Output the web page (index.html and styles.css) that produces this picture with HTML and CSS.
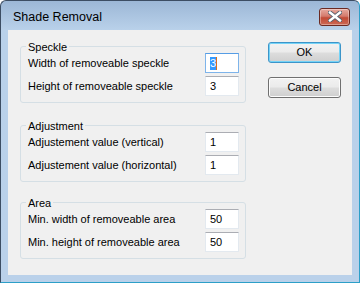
FILE: index.html
```html
<!DOCTYPE html>
<html lang="en">
<head>
    <meta charset="UTF-8">
    <title>Shade Removal</title>
    <link rel="stylesheet" href="styles.css">
</head>
<body>

    <div class="window">
        <div class="titlebar">
            <span class="title">Shade Removal</span>
            <div class="close-btn">
                <svg width="14" height="11" viewBox="0 0 14 11">
                    <path d="M2 1.5 L12 9.5 M12 1.5 L2 9.5" stroke="#55606d" stroke-width="4.2" stroke-linecap="square"/>
                    <path d="M2 1.5 L12 9.5 M12 1.5 L2 9.5" stroke="#ffffff" stroke-width="2.4" stroke-linecap="square"/>
                </svg>
            </div>
        </div>

        <div class="client">
            <div class="groups">
                <div class="group group-speckle">
                    <div class="group-title">Speckle</div>
                    <div class="row">
                        <span class="label">Width of removeable speckle</span>
                        <span class="field focused"><span class="sel">3</span><span class="caret"></span></span>
                    </div>
                    <div class="row">
                        <span class="label">Height of removeable speckle</span>
                        <span class="field">3</span>
                    </div>
                </div>

                <div class="group group-adjust">
                    <div class="group-title">Adjustment</div>
                    <div class="row">
                        <span class="label">Adjustement value (vertical)</span>
                        <span class="field">1</span>
                    </div>
                    <div class="row">
                        <span class="label">Adjustement value (horizontal)</span>
                        <span class="field">1</span>
                    </div>
                </div>

                <div class="group group-area">
                    <div class="group-title">Area</div>
                    <div class="row">
                        <span class="label">Min. width of removeable area</span>
                        <span class="field">50</span>
                    </div>
                    <div class="row">
                        <span class="label">Min. height of removeable area</span>
                        <span class="field">50</span>
                    </div>
                </div>
            </div>

            <div class="buttons">
                <div class="btn default">OK</div>
                <div class="btn">Cancel</div>
            </div>
        </div>
    </div>

</body>
</html>
```

FILE: styles.css
```css
/* Windows 7 basic style dialog */
body {
    margin: 0;
    background: #ffffff;
    font-family: "Liberation Sans", Arial, sans-serif;
}
.window {
    width: 360px;
    height: 283px;
    box-sizing: border-box;
    border: 1px solid #3c4d63;
    border-right-color: #2c9fc8;
    border-bottom-color: #2c9fc8;
    border-radius: 6px 6px 0 0;
    background: linear-gradient(#9cb7d6 0px, #b9d1ea 29px, #bad1ea 100%);
    display: flex;
    flex-direction: column;
}
.titlebar {
    height: 29px;
    flex: none;
    display: flex;
    align-items: center;
    justify-content: space-between;
    padding: 0 9px 0 12px;
}
.title {
    font-size: 12.5px;
    color: #000;
    padding-top: 2px;
}
.close-btn {
    width: 29px;
    height: 16px;
    border: 1px solid #6b2a22;
    border-radius: 3px;
    background: linear-gradient(#e6a99f 0%, #d47a6c 45%, #c24a36 55%, #cc6a55 100%);
    box-shadow: inset 0 0 0 1px rgba(255, 255, 255, 0.35);
    display: flex;
    align-items: center;
    justify-content: center;
    margin-top: 2px;
}
.client {
    flex: 1;
    margin: 0 7px 7px 7px;
    background: #f0f0f0;
    display: flex;
    align-items: flex-start;
    padding: 12px 0 0 12px;
    font-size: 11px;
    line-height: 13px;
    color: #000;
}
.groups {
    width: 226px;
    padding-top: 4px;
}
.group {
    box-sizing: border-box;
    border: 1px solid #d5dfe5;
    border-radius: 3px;
    padding: 0 6px 6px 7px;
}
.group-adjust {
    margin-top: 22px;
}
.group-area {
    margin-top: 20px;
}
.group-title {
    width: fit-content;
    margin: -6px 0 0 -2px;
    padding: 0 2px;
    height: 12px;
    line-height: 12px;
    background: #f0f0f0;
}
.row {
    display: flex;
    align-items: center;
    justify-content: space-between;
    height: 20px;
    margin-bottom: 3px;
}
.row:last-child {
    margin-bottom: 0;
}
.field {
    box-sizing: border-box;
    width: 34px;
    height: 20px;
    background: #fff;
    border: 1px solid #e3e9ef;
    border-top-color: #abadb3;
    padding: 0 0 0 4px;
    display: flex;
    align-items: center;
}
.field.focused {
    border-color: #7eb4ea;
    border-top-color: #569de5;
}
.sel {
    background: #3399ff;
    color: #fff;
    line-height: 13px;
}
.caret {
    width: 1px;
    height: 13px;
    background: #d9701e;
}
.buttons {
    margin-left: 22px;
    width: 73px;
}
.btn {
    box-sizing: border-box;
    height: 21px;
    margin-bottom: 14px;
    border: 1px solid #707070;
    border-radius: 3px;
    background: linear-gradient(#f2f2f2 0%, #ebebeb 48%, #dddddd 52%, #cfcfcf 100%);
    box-shadow: inset 0 0 0 1px #fcfcfc;
    text-align: center;
    line-height: 19px;
}
.btn.default {
    border-color: #3c95c9;
    box-shadow: inset 0 0 0 1px #74d3f7;
}
```
